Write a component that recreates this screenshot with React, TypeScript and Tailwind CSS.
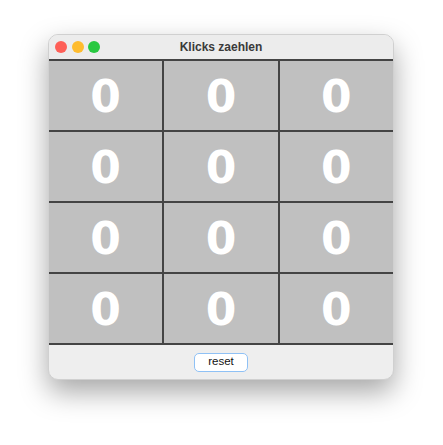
import React, { useState } from 'react'

const ROWS = 4
const COLS = 3

export default function App() {
  const [counts, setCounts] = useState<number[]>(Array(ROWS * COLS).fill(0))

  const click = (i: number) => {
    setCounts(prev => prev.map((c, j) => (j === i ? c + 1 : c)))
  }

  return (
    <div className="w-[443px] h-[445px] bg-white pt-[34px] pl-[48px] font-['Liberation_Sans',Arial,sans-serif]">
      <div className="w-[346px] h-[346px] rounded-[10px] bg-[#eeeeee] border border-[#d0d0d0] shadow-[0_12px_28px_rgba(0,0,0,0.35)] overflow-hidden flex flex-col">
        {/* title bar */}
        <div className="relative h-[24px] shrink-0 bg-[#ececec] flex items-center justify-center">
          <div className="absolute left-[6px] top-[6px] flex gap-[4.5px]">
            <span className="w-[12px] h-[12px] rounded-full bg-[#fe5f57]" />
            <span className="w-[12px] h-[12px] rounded-full bg-[#febc2e]" />
            <span className="w-[12px] h-[12px] rounded-full bg-[#28c840]" />
          </div>
          <span className="text-[12px] font-bold text-[#3a3a3a]">Klicks zaehlen</span>
        </div>

        {/* counter grid */}
        <div className="grid grid-cols-3 grid-rows-4 gap-[2px] bg-[#444444] border-y-2 border-[#444444] h-[286px] shrink-0">
          {counts.map((c, i) => (
            <button
              key={i}
              onClick={() => click(i)}
              className="bg-[#c0c0c0] flex items-center justify-center text-white font-bold text-[44px] leading-none pt-[2px] font-['DejaVu_Sans',sans-serif]"
            >
              {c}
            </button>
          ))}
        </div>

        {/* bottom */}
        <div className="flex-1 flex items-center justify-center">
          <button
            onClick={() => setCounts(Array(ROWS * COLS).fill(0))}
            className="w-[54px] h-[19px] rounded-[5px] bg-white border border-[#8fc1f5] text-[11.5px] text-[#111] leading-none"
          >
            reset
          </button>
        </div>
      </div>
    </div>
  )
}
